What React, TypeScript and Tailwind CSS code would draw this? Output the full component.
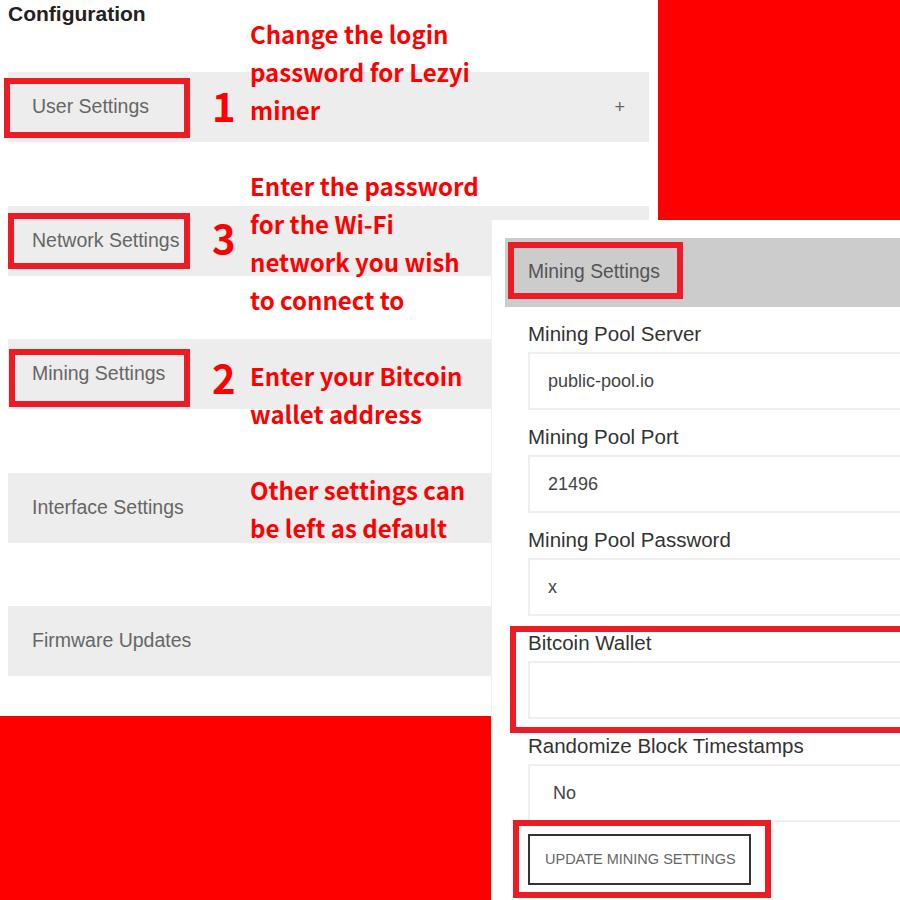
import React from 'react'

const ROWS = [
  { label: 'User Settings', plus: true, box: 'left-[-4px] top-[6px] w-[186px] h-[60px]' },
  { label: 'Network Settings', box: 'left-0 top-[7px] w-[182px] h-[56px]' },
  { label: 'Mining Settings', box: 'left-[1px] top-[10px] w-[181px] h-[58px]' },
  { label: 'Interface Settings' },
  { label: 'Firmware Updates' },
]

const NOTES = [
  { n: '1', pos: 'justify-end pb-[1px]', lines: ['Change the login', 'password for Lezyi', 'miner'] },
  { n: '3', pos: 'justify-center pb-[12px]', lines: ['Enter the password', 'for the Wi-Fi', 'network you wish', 'to connect to'] },
  { n: '2', pos: 'justify-start -mt-[3px]', lines: ['Enter your Bitcoin', 'wallet address'] },
  { n: '', pos: '', lines: ['Other settings can', 'be left as default'] },
]

const FIELDS = [
  { label: 'Mining Pool Server', value: 'public-pool.io' },
  { label: 'Mining Pool Port', value: '21496' },
  { label: 'Mining Pool Password', value: 'x' },
  { label: 'Bitcoin Wallet', value: '', boxed: true },
  { label: 'Randomize Block Timestamps', value: 'No', select: true },
]

const ui = { fontFamily: '"Liberation Sans", Arial, sans-serif' }
const note = { fontFamily: '"Noto Sans CJK SC", "Noto Sans", sans-serif' }

export default function App() {
  return (
    <div className="relative w-[900px] h-[900px] bg-white overflow-hidden" style={ui}>
      {/* configuration list */}
      <div className="pl-2 pt-[1px]">
        <h1 className="text-[21px] leading-[26px] font-bold text-[#222]">Configuration</h1>
        <div className="mt-[45px] flex flex-col gap-[63.5px] w-[641px]">
          {ROWS.map(r => (
            <div key={r.label} className="relative h-[70px] bg-[#ededed] flex items-center justify-between pl-6 pr-6">
              <span className="text-[19.5px] text-[#666]">{r.label}</span>
              {r.plus && <span className="text-[18px] text-[#666]">+</span>}
              {r.box && <div className={`absolute border-[6px] border-[#ed1c24] ${r.box}`} />}
            </div>
          ))}
        </div>
      </div>

      {/* red blocks */}
      <div className="absolute left-[658px] top-0 w-[242px] h-[220px] bg-[#ff0000]" />
      <div className="absolute left-0 top-[716px] w-[491px] h-[184px] bg-[#ff0000]" />

      {/* annotations */}
      <div className="absolute left-[212px] top-[15px] flex flex-col gap-[38px] font-bold text-[#ff0000]" style={note}>
        {NOTES.map(x => (
          <div key={x.lines[0]} className="flex">
            <div className={`w-[38px] flex flex-col ${x.pos}`}>
              {x.n && <span className="text-[40px] leading-[46px]">{x.n}</span>}
            </div>
            <div className="text-[24px] leading-[38px]">
              {x.lines.map(l => <div key={l}>{l}</div>)}
            </div>
          </div>
        ))}
      </div>

      {/* mining settings panel */}
      <div className="absolute left-[491px] top-[220px] w-[409px] h-[680px] bg-white overflow-hidden border-l border-[#f0f0f0]">
        <div className="relative ml-[13px] mt-[18px] h-[69px] bg-[#cccccc] flex items-center pl-[23px]">
          <span className="text-[19.3px] text-[#555]">Mining Settings</span>
          <div className="absolute left-[3px] top-[4px] w-[175px] h-[57px] border-[6px] border-[#ed1c24]" />
        </div>
        <div className="pl-[36px]">
          {FIELDS.map(f => (
            <div key={f.label} className="relative mt-[15px]">
              <div className="h-[24px] leading-[24px] text-[20.5px] text-[#333]">{f.label}</div>
              <div className={`mt-[6px] h-[58px] w-[420px] border-2 border-[#eeeeee] flex items-center ${f.select ? 'pl-[23px]' : 'pl-[18px]'} text-[18px] text-[#444]`}>
                {f.value}
              </div>
              {f.boxed && <div className="absolute left-[-18px] top-[-5px] w-[420px] h-[107px] border-[6px] border-[#ed1c24]" />}
            </div>
          ))}
          <div className="relative mt-[12px] w-[223px] h-[51px] border-2 border-[#333] flex items-center pl-[15px] text-[14.5px] text-[#666]">
            UPDATE MINING SETTINGS
            <div className="absolute left-[-17px] top-[-16px] w-[258px] h-[78px] border-[6px] border-[#ed1c24]" />
          </div>
        </div>
      </div>
    </div>
  )
}
